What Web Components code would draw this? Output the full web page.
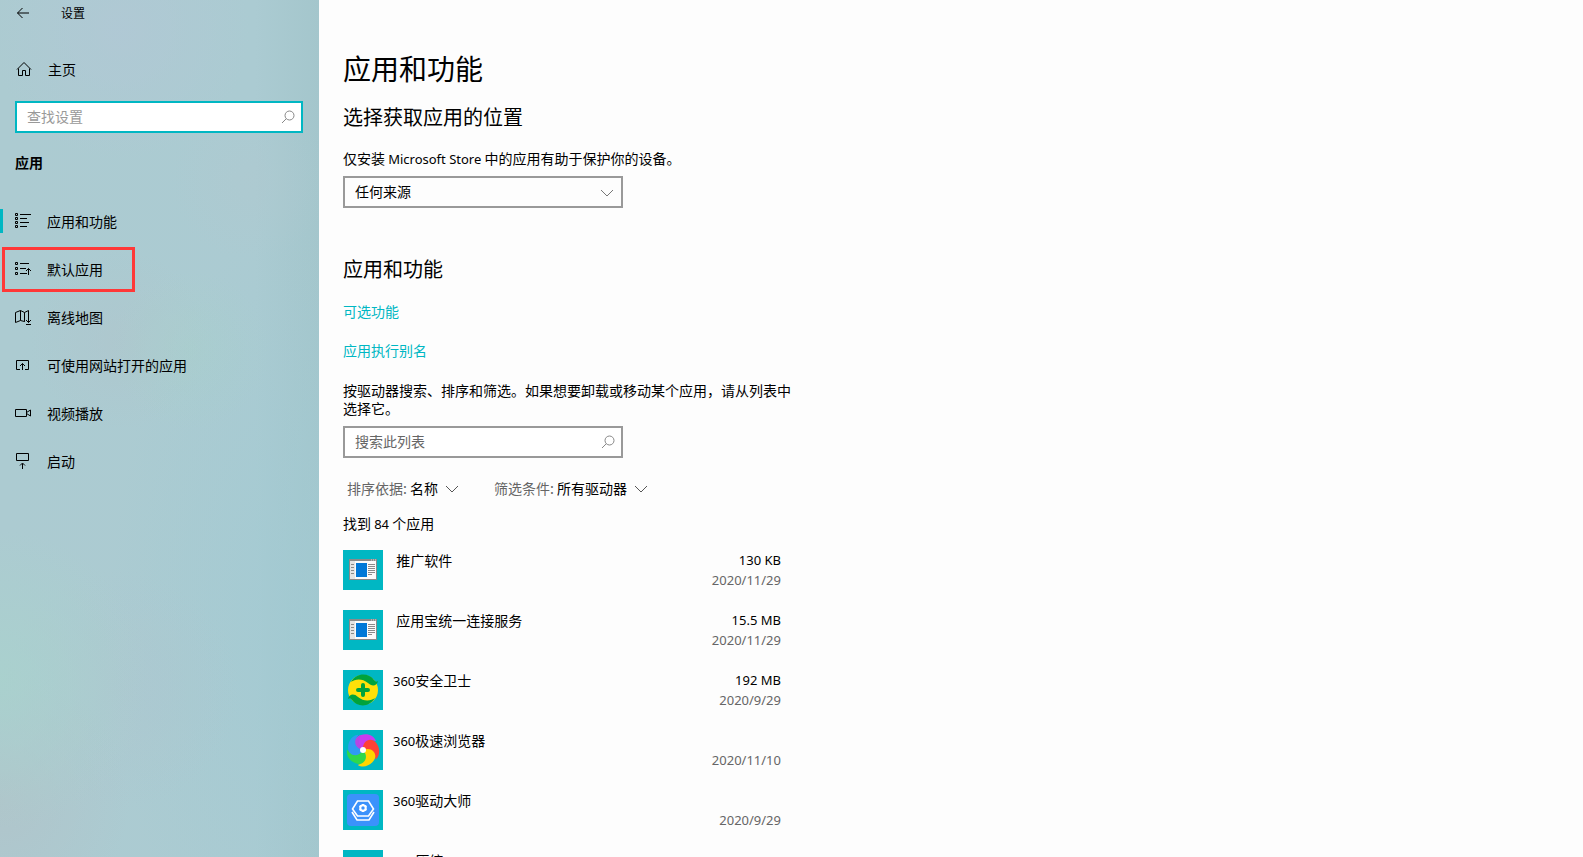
<!DOCTYPE html>
<html lang="zh-CN">
<head>
<meta charset="utf-8">
<title>设置</title>
<style>
body { margin: 0; font-family: "Noto Sans CJK SC", sans-serif; font-size: 14px; line-height: 18px; color: #000; --accent: #00b7c3; }
</style>
</head>
<body>
<settings-window></settings-window>

<script>
const define = (name, html, setup) => {
  const template = document.createElement('template');
  template.innerHTML = html;
  customElements.define(name, class extends HTMLElement {
    constructor() {
      super();
      this.attachShadow({ mode: 'open' }).append(template.content.cloneNode(true));
    }
    connectedCallback() { if (setup) setup(this, this.shadowRoot); }
  });
};

const LINE_ICONS = {
  back: '<path d="M2.500 8H14M7.500 3L2.500 8L7.500 13"/>',
  home: '<path d="M1 8.500L8 1.500L15 8.500M2.500 7.500V14.500H6.500V9.500H9.500V14.500H13.500V7.500"/>',
  search: '<circle cx="9.500" cy="6.500" r="4.500"/><path d="M6.300 9.700L2 14"/>',
  chevron: '<path d="M2 6L8 12L14 6"/>',
  list: '<path d="M.5 .5h2v2h-2zM.5 4.500h2v2h-2zM.5 8.500h2v2h-2zM.5 12.500h2v2h-2zM5 1.500H16M5 5.500H12M5 9.500H14M5 13.500H12"/>',
  defaults: '<path d="M.5 1.500h2v2h-2zM.5 6.500h2v2h-2zM.5 11.500h2v2h-2zM5 2.500H14M5 7.500H11M5 12.500H12M13.500 14V7.500M11 10L13.500 7.500L16 10"/>',
  map: '<path d="M10 12.500L9.500 12.500L5.500 11.500L.5 13.500V3.500L5.500 1.500L9.500 3.500L13.500 1.500V13.500M5.500 1.500V11.500M9.500 3.500V12.500M11 11L13.500 13.500L16 11M11 15.500H16"/>',
  site: '<path d="M5 12.500H1.500V3.500H13.500V12.500H10M7.500 13V6.500M5 9L7.500 6.500L10 9"/>',
  video: '<path d="M.5 4.500H11.500V11.500H.5zM11.500 7.500L15.500 5V11L11.500 8.500"/>',
  startup: '<path d="M1.500 .5H13.500V7.500H1.500zM7.500 16V10.500M5 12.500L7.500 10L10 12.500"/>'
};

define('line-icon', `
<style>
:host { display: block; width: 16px; height: 16px; flex: none; }
svg { display: block; fill: none; stroke: currentColor; stroke-width: 1; }
</style>
<svg width="16" height="16" viewBox="0 0 16 16" aria-hidden="true"></svg>`,
(el, root) => { root.querySelector('svg').innerHTML = LINE_ICONS[el.getAttribute('name')]; });

const PETAL = 'M20 20C10 18 10 7 18 5C25 3 31 6 33 11C27 9 22 12 20 20Z';
const APP_ICONS = {
  window: `<rect x="6" y="9" width="28" height="21" fill="#8a8a8a"/><rect x="7" y="11" width="26" height="18" fill="#fafafa"/>
    <rect x="7" y="11" width="5" height="18" fill="#e4e4e4"/><path d="M28 10h1M30 10h1M32 10h1" stroke="#ddd"/>
    <rect x="13" y="13" width="11" height="14" fill="#0078d7"/>
    <path d="M8 14.500h3M8 17.500h3M8 20.500h3M8 23.500h3M25 14.500h7M25 16.500h7M25 18.500h7M25 20.500h7M25 22.500h7M25 24.500h4" stroke="#8a8a8a"/>`,
  guard: `<circle cx="20" cy="20" r="15" fill="#ffe00a"/>
    <path d="M8 12C14 2 26 3 31 10C33 12 33 12 35 11C34 16 29 17 25 13C19 8 12 9 8 12Z" fill="#00a33d"/>
    <path d="M32 28C26 38 14 37 9 30C7 28 7 28 5 29C6 24 11 23 15 27C21 32 28 31 32 28Z" fill="#00a33d"/>
    <path d="M20 15V25M15 20H25" stroke="#00a33d" stroke-width="4" stroke-linecap="round"/>`,
  browser: ['#c63df0', '#ff4136', '#ffd500', '#2fd84b', '#2f9bf2'].map((c, i) =>
    `<path d="${PETAL}" fill="${c}" transform="rotate(${i * 72} 20 20)"/>`).join('') +
    '<path d="M20 20C10 18 10 7 18 5C15 10 16 16 20 20Z" fill="#b545e4"/><circle cx="20" cy="20" r="3" fill="#fff"/>',
  driver: `<rect x="4" y="4" width="32" height="32" rx="4" fill="#3b92fb"/>
    <g fill="none" stroke="#fff"><path d="M9.500 19L14.500 11H25.500L30.500 19L25.500 26H14.500ZM9 22L14 30H26L31 22" stroke-width="1.600"/>
    <circle cx="20" cy="18" r="2.700" stroke-width="2"/><path d="M20 14v1M20 21v1M16.500 16l1 .5M22.500 19.500l1 .5M16.500 20l1-.5M22.500 16.500l1-.5" stroke-width="2"/></g>`,
  blank: ''
};

define('app-icon', `
<style>
:host { display: block; width: 40px; height: 40px; flex: none; background: var(--accent); }
svg { display: block; }
</style>
<svg width="40" height="40" viewBox="0 0 40 40" aria-hidden="true"></svg>`,
(el, root) => { root.querySelector('svg').innerHTML = APP_ICONS[el.getAttribute('name')] || ''; });

define('search-box', `
<style>
:host { display: block; }
div { display: flex; align-items: center; box-sizing: border-box; height: 32px; border: 2px solid var(--edge, #999); background: #fff; padding: 0 5px 0 10px; color: #888; }
input { flex: 1; min-width: 0; border: 0; outline: 0; padding: 0 0 2px; background: none; font: inherit; color: #000; }
input::placeholder { color: var(--hint, #666); opacity: 1; }
</style>
<div><input type="search"><line-icon name="search"></line-icon></div>`,
(el, root) => {
  const input = root.querySelector('input');
  input.placeholder = el.getAttribute('placeholder');
  input.setAttribute('aria-label', input.placeholder);
});

define('nav-item', `
<style>
:host { display: block; }
a { display: flex; align-items: center; box-sizing: border-box; height: 48px; padding-left: 15px; gap: 16px; color: inherit; text-decoration: none; position: relative; }
:host([current]) a::before { content: ""; position: absolute; left: 0; top: 12px; width: 3px; height: 24px; background: var(--accent); }
:host([marked]) a::after { content: ""; position: absolute; left: 2px; top: 2px; width: 133px; height: 45px; box-sizing: border-box; border: 3px solid #ff3838; }
</style>
<a href="#"><line-icon></line-icon><slot></slot></a>`,
(el, root) => {
  const icon = root.querySelector('line-icon');
  icon.shadowRoot.querySelector('svg').innerHTML = LINE_ICONS[el.getAttribute('icon')];
});

define('side-bar', `
<style>
:host { display: flex; flex-direction: column; width: 319px; flex: none; overflow: hidden;
  background:
    radial-gradient(circle at 0 680px, #a9d2cdcc, transparent 150px),
    radial-gradient(circle at 0 800px, #b1c3c9cc, transparent 130px),
    radial-gradient(circle at 120px 690px, #adc6cf99, transparent 120px),
    radial-gradient(ellipse at 300px 620px, #9fcad399, transparent 190px),
    radial-gradient(circle at 190px 350px, #a9cfcc99, transparent 80px),
    radial-gradient(circle at 120px 340px, #afc5cc99, transparent 90px),
    radial-gradient(circle at 120px 30px, #b1c8d5cc, transparent 130px),
    radial-gradient(circle at 250px 180px, #afc9d099, transparent 80px),
    linear-gradient(90deg, #accbd1, #abcbd2 80%, #a4c6cc); }
header { display: flex; align-items: center; height: 26px; padding-left: 15px; gap: 30px; font-size: 12px; }
button { border: 0; background: none; padding: 0; color: inherit; }
.home { display: flex; align-items: center; height: 40px; margin-top: 23px; padding-left: 16px; gap: 16px; color: inherit; text-decoration: none; }
search-box { margin: 12px 16px 0 15px; --edge: var(--accent); --hint: #999; }
h2 { margin: 19px 15px 25px; font-size: 14px; line-height: 20px; font-weight: 700; }
</style>
<header><button aria-label="返回"><line-icon name="back"></line-icon></button><span>设置</span></header>
<a class="home" href="#"><line-icon name="home"></line-icon>主页</a>
<search-box placeholder="查找设置"></search-box>
<h2>应用</h2>
<nav>
<nav-item icon="list" current>应用和功能</nav-item>
<nav-item icon="defaults" marked>默认应用</nav-item>
<nav-item icon="map">离线地图</nav-item>
<nav-item icon="site">可使用网站打开的应用</nav-item>
<nav-item icon="video">视频播放</nav-item>
<nav-item icon="startup">启动</nav-item>
</nav>`);

define('drop-down', `
<style>
:host { display: flex; align-items: center; }
label { color: #666; white-space: pre; }
.box { display: grid; align-items: center; }
select { grid-area: 1 / 1; appearance: none; border: 0; border-radius: 0; outline: 0; background: none; font: inherit; color: #000; margin: 0; padding: 0 22px 0 0; }
line-icon { grid-area: 1 / 1; justify-self: end; pointer-events: none; color: #555; }
:host([boxed]) .box { flex: 1; box-sizing: border-box; height: 32px; border: 2px solid #999; }
:host([boxed]) select { height: 28px; padding: 0 22px 2px 10px; }
:host([boxed]) line-icon { margin-right: 6px; color: #777; }
</style>
<label for="choice"></label>
<div class="box"><select id="choice"><option></option></select><line-icon name="chevron"></line-icon></div>`,
(el, root) => {
  const label = el.getAttribute('label');
  if (el.hasAttribute('boxed')) {
    root.querySelector('label').remove();
    root.querySelector('select').setAttribute('aria-label', label);
  } else root.querySelector('label').textContent = label + ': ';
  root.querySelector('option').textContent = el.getAttribute('value');
});

define('app-row', `
<style>
:host { display: flex; gap: 10px; height: 40px; }
.name { flex: 1; line-height: 20px; }
.facts { font-family: "Noto Sans", sans-serif; font-size: 13px; line-height: 20px; text-align: right; }
.facts div { height: 20px; }
.date { color: #666; }
</style>
<app-icon></app-icon>
<div class="name"><slot></slot></div>
<div class="facts"><div class="size"></div><div class="date"></div></div>`,
(el, root) => {
  root.querySelector('app-icon').shadowRoot.querySelector('svg').innerHTML = APP_ICONS[el.getAttribute('icon')];
  root.querySelector('.size').textContent = el.getAttribute('size') || '';
  root.querySelector('.date').textContent = el.getAttribute('date') || '';
});

define('apps-page', `
<style>
:host { display: block; flex: 1; min-width: 0; overflow: hidden; background: #fdfdfd; box-sizing: border-box; padding: 50px 24px 0; }
h1, h2, p { margin: 0; font-weight: 400; }
h1 { font-size: 28px; line-height: 36px; }
h2 { font-size: 20px; line-height: 28px; margin-top: 17px; }
.section { margin-top: 47px; }
p { max-width: 450px; }
.source { margin: 18px 0 9px; }
.latin { font-family: "Noto Sans", sans-serif; font-size: 13px; line-height: 1; }
a { display: block; width: fit-content; color: var(--accent); text-decoration: none; margin-top: 21px; }
h2 + a { margin-top: 19px; }
.help { margin: 22px 0 9px; }
drop-down[boxed], search-box { max-width: 280px; }
.filters { display: flex; gap: 34px; padding-left: 4px; margin: 21px 0 17px; }
.apps { display: grid; gap: 20px; max-width: 438px; margin-top: 18px; }
</style>
<h1>应用和功能</h1>
<h2>选择获取应用的位置</h2>
<p class="source">仅安装 <span class="latin">Microsoft Store</span> 中的应用有助于保护你的设备。</p>
<drop-down boxed label="选择获取应用的位置" value="任何来源"></drop-down>
<h2 class="section">应用和功能</h2>
<a href="#">可选功能</a>
<a href="#">应用执行别名</a>
<p class="help">按驱动器搜索、排序和筛选。如果想要卸载或移动某个应用，请从列表中选择它。</p>
<search-box placeholder="搜索此列表"></search-box>
<div class="filters">
<drop-down label="排序依据" value="名称"></drop-down>
<drop-down label="筛选条件" value="所有驱动器"></drop-down>
</div>
<p>找到 <span class="latin">84</span> 个应用</p>
<div class="apps">
<app-row icon="window" size="130 KB" date="2020/11/29">&nbsp;推广软件</app-row>
<app-row icon="window" size="15.5 MB" date="2020/11/29">&nbsp;应用宝统一连接服务</app-row>
<app-row icon="guard" size="192 MB" date="2020/9/29"><span class="latin">360</span>安全卫士</app-row>
<app-row icon="browser" date="2020/11/10"><span class="latin">360</span>极速浏览器</app-row>
<app-row icon="driver" date="2020/9/29"><span class="latin">360</span>驱动大师</app-row>
<app-row icon="blank"><span class="latin">360</span>压缩</app-row>
</div>`);

define('settings-window', `
<style>
:host { display: flex; height: 100vh; overflow: hidden; }
</style>
<side-bar></side-bar>
<apps-page></apps-page>`);
</script>
</body>
</html>
